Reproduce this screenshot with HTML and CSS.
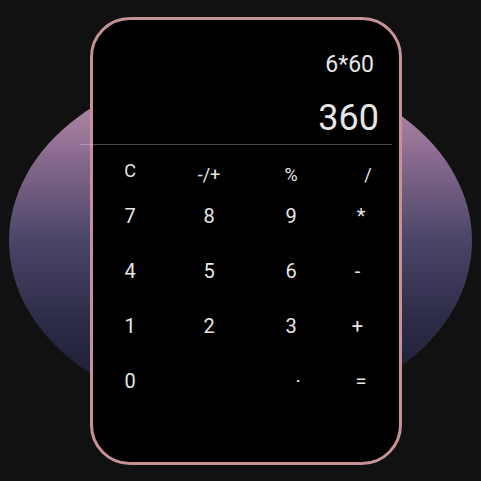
FILE: index.html
```html
<!DOCTYPE html>
<html>
<head>
<meta charset="utf-8">
<link rel="stylesheet" href="styles.css">
</head>
<body>
<div class="stage">
  <div class="blob"></div>
  <div class="phone">
    <div class="expr">6*60</div>
    <div class="result">360</div>
    <div class="divider"></div>
    <div class="keys">
      <div class="row row-top">
        <span class="key key-c">C</span>
        <span class="key">-/+</span>
        <span class="key">%</span>
        <span class="key shift">/</span>
      </div>
      <div class="row">
        <span class="key">7</span>
        <span class="key">8</span>
        <span class="key">9</span>
        <span class="key">*</span>
      </div>
      <div class="row">
        <span class="key">4</span>
        <span class="key">5</span>
        <span class="key">6</span>
        <span class="key pull">-</span>
      </div>
      <div class="row">
        <span class="key">1</span>
        <span class="key">2</span>
        <span class="key">3</span>
        <span class="key pull">+</span>
      </div>
      <div class="row">
        <span class="key">0</span>
        <span class="key"></span>
        <span class="key shift">·</span>
        <span class="key">=</span>
      </div>
    </div>
  </div>
</div>
</body>
</html>
```
FILE: styles.css
```css
html, body {
  margin: 0;
  padding: 0;
  background: #111111;
}

.stage {
  width: 481px;
  height: 481px;
  display: grid;
  place-items: center;
  overflow: hidden;
}

.blob,
.phone {
  grid-area: 1 / 1;
}

.blob {
  width: 463px;
  height: 348px;
  border-radius: 50%;
  background: linear-gradient(to bottom, #ca9ab7 0%, #8b6c90 25%, #4a4567 50%, #2a2a45 75%, #15172a 100%);
}

.phone {
  box-sizing: border-box;
  width: 312px;
  height: 448px;
  margin-left: 11px;
  border: 3px solid #c69296;
  border-radius: 40px;
  background: #000000;
  font-family: Roboto, "Noto Sans", sans-serif;
  color: #e6e6e6;
  display: flex;
  flex-direction: column;
}

.expr {
  margin-top: 32px;
  padding-right: 25px;
  text-align: right;
  font-size: 23px;
  line-height: 26px;
}

.result {
  margin-top: 20px;
  padding-right: 20px;
  text-align: right;
  font-size: 36px;
  line-height: 40px;
}

.divider {
  margin-top: 6px;
  margin-left: -13px;
  width: 312px;
  height: 1px;
  background: rgba(255, 225, 235, 0.3);
}

.keys {
  margin-top: 15px;
  display: flex;
  flex-direction: column;
}

.row {
  display: grid;
  grid-template-columns: 74px 84px 80px 60px;
  height: 55px;
  align-items: center;
  font-size: 20px;
  line-height: 24px;
}

.row-top {
  height: 29px;
  font-size: 18px;
  line-height: 22px;
}

.key {
  text-align: center;
}

.key-c {
  padding-bottom: 9px;
}

.shift {
  padding-left: 14px;
}

.pull {
  padding-right: 7px;
}
```
